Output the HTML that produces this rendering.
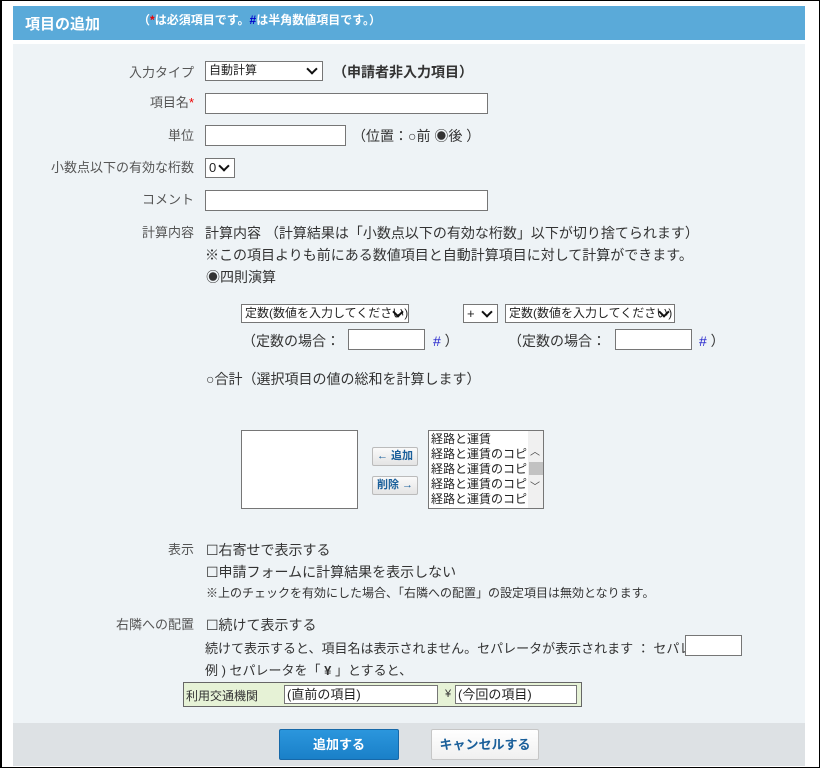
<!DOCTYPE html>
<html><head><meta charset="utf-8"><style>
*{box-sizing:border-box;margin:0;padding:0}
body{width:820px;height:771px;background:#fff;font-family:"Liberation Sans","Noto Sans CJK JP",sans-serif;color:#333;position:relative;overflow:hidden}
.a{position:absolute;white-space:nowrap}
.frame{position:absolute;left:0;top:0;width:820px;height:768px;border:1px solid #000;border-left-width:2px}
.hd{left:13px;top:6px;width:792px;height:34px;background:#5aaad9}
.ct{left:13px;top:44px;width:792px;height:679px;background:#eef3f6}
.ft{left:13px;top:723px;width:792px;height:43px;background:#dde1e4}
.lb{font-size:13px;color:#555;text-align:right;width:180px;left:14px}
.t{font-size:14px;color:#333}
.in{background:#fff;border:1px solid #767676}
.sel{background:#fff;border:1px solid #767676;font-size:12px;color:#222;padding-left:3px;line-height:17px}
.sel:after{content:"";position:absolute;right:6px;top:3px;width:6px;height:6px;border-right:2px solid #111;border-bottom:2px solid #111;transform:rotate(45deg)}
.btn{font-size:11px;color:#1a5f9a;font-weight:bold;background:linear-gradient(#fafafa,#e4e4e4);border:1px solid #bbb;border-radius:2px;text-align:center;line-height:17px}
</style></head><body>
<div class="frame"></div>
<div class="a hd"></div>
<div class="a" style="left:25px;top:13px;font-size:15px;font-weight:bold;color:#fff">項目の追加</div>
<div class="a" style="left:138px;top:11px;font-size:12px;font-weight:bold;color:#fff">（<span style="color:#e00">*</span>は必須項目です。<span style="color:#00c">#</span>は半角数値項目です。）</div>
<div class="a ct"></div>
<div class="a ft"></div>

<div class="a lb" style="top:62px">入力タイプ</div>
<div class="a sel" style="left:205px;top:61px;width:118px;height:20px">自動計算</div>
<div class="a t" style="left:333px;top:62px;font-weight:bold">（申請者非入力項目）</div>

<div class="a lb" style="top:92px">項目名<span style="color:#e00">*</span></div>
<div class="a in" style="left:205px;top:93px;width:283px;height:21px"></div>

<div class="a lb" style="top:125px">単位</div>
<div class="a in" style="left:205px;top:125px;width:141px;height:21px"></div>
<div class="a t" style="left:352px;top:126px">（位置：○前 ◉後 ）</div>

<div class="a lb" style="top:157px">小数点以下の有効な桁数</div>
<div class="a sel" style="left:205px;top:158px;width:30px;height:20px;font-size:13px">0</div>

<div class="a lb" style="top:189px">コメント</div>
<div class="a in" style="left:205px;top:190px;width:283px;height:21px"></div>

<div class="a lb" style="top:222px">計算内容</div>
<div class="a t" style="left:205px;top:223px">計算内容 （計算結果は「小数点以下の有効な桁数」以下が切り捨てられます）</div>
<div class="a t" style="left:205px;top:245px">※この項目よりも前にある数値項目と自動計算項目に対して計算ができます。</div>
<div class="a t" style="left:206px;top:267px">◉四則演算</div>

<div class="a sel" style="left:241px;top:304px;width:168px;height:19px">定数(数値を入力してください)</div>
<div class="a sel" style="left:463px;top:304px;width:35px;height:19px;font-size:13px">+</div>
<div class="a sel" style="left:505px;top:304px;width:170px;height:19px">定数(数値を入力してください)</div>
<div class="a t" style="left:242px;top:331px">（定数の場合：</div>
<div class="a in" style="left:348px;top:329px;width:77px;height:21px"></div>
<div class="a t" style="left:433px;top:331px"><span style="color:#22c">#</span> ）</div>
<div class="a t" style="left:508px;top:331px">（定数の場合：</div>
<div class="a in" style="left:615px;top:329px;width:77px;height:21px"></div>
<div class="a t" style="left:699px;top:331px"><span style="color:#22c">#</span> ）</div>

<div class="a t" style="left:206px;top:369px">○合計（選択項目の値の総和を計算します）</div>

<div class="a in" style="left:241px;top:430px;width:117px;height:79px"></div>
<div class="a btn" style="left:372px;top:447px;width:46px;height:19px">← 追加</div>
<div class="a btn" style="left:372px;top:476px;width:46px;height:19px">削除 →</div>
<div class="a in" style="left:428px;top:430px;width:116px;height:79px;overflow:hidden;font-size:12px;line-height:15px;padding:1px 0 0 2px;color:#222">経路と運賃<br>経路と運賃のコピー<br>経路と運賃のコピー<br>経路と運賃のコピー<br>経路と運賃のコピー</div>
<div class="a" style="left:528px;top:431px;width:15px;height:77px;background:#f0f0f0"></div>
<div class="a" style="left:529px;top:462px;width:14px;height:13px;background:#c2c2c2"></div>
<div class="a" style="left:530px;top:443px;font-size:10px;color:#444">︿</div>
<div class="a" style="left:530px;top:478px;font-size:10px;color:#444">﹀</div>

<div class="a lb" style="top:539px">表示</div>
<div class="a t" style="left:206px;top:540px">☐右寄せで表示する</div>
<div class="a t" style="left:206px;top:562px">☐申請フォームに計算結果を表示しない</div>
<div class="a" style="left:206px;top:584px;font-size:12px;color:#333">※上のチェックを有効にした場合、「右隣への配置」の設定項目は無効となります。</div>

<div class="a lb" style="top:614px">右隣への配置</div>
<div class="a t" style="left:206px;top:615px">☐続けて表示する</div>
<div class="a" style="left:205px;top:638px;font-size:13px">続けて表示すると、項目名は表示されません。セパレータが表示されます ： セパレータ</div>
<div class="a in" style="left:685px;top:635px;width:57px;height:21px"></div>
<div class="a" style="left:205px;top:660px;font-size:13px">例 ) セパレータを「 <b>¥</b> 」とすると、</div>
<div class="a" style="left:183px;top:682px;width:399px;height:25px;background:#e6f2d6;border:1px solid #666"></div>
<div class="a" style="left:186px;top:687px;font-size:12px">利用交通機関</div>
<div class="a in" style="left:284px;top:685px;width:154px;height:19px;font-size:13px;padding-left:2px;line-height:17px;color:#222">(直前の項目)</div>
<div class="a" style="left:445px;top:688px;font-size:11px">¥</div>
<div class="a in" style="left:455px;top:685px;width:122px;height:19px;font-size:13px;padding-left:2px;line-height:17px;color:#222">(今回の項目)</div>

<div class="a" style="left:279px;top:729px;width:120px;height:31px;background:linear-gradient(#2b96dd,#1a80c8);border:1px solid #1668a8;border-radius:2px;color:#fff;font-weight:bold;font-size:13px;text-align:center;line-height:29px">追加する</div>
<div class="a" style="left:431px;top:729px;width:108px;height:31px;background:linear-gradient(#fff,#f0f0f0);border:1px solid #c6c6c6;border-radius:2px;color:#1a5f9a;font-weight:bold;font-size:13px;text-align:center;line-height:29px">キャンセルする</div>
</body></html>
